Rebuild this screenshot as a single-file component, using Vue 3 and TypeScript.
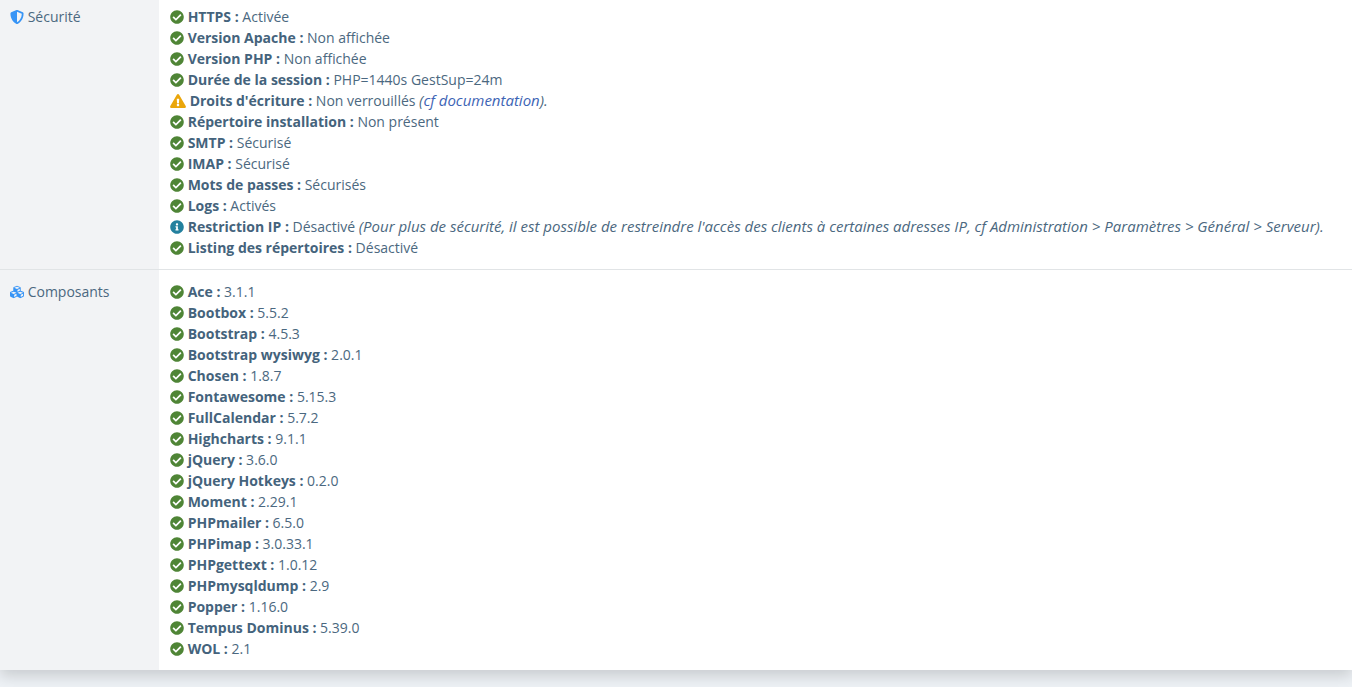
<script setup lang="ts">
type Status = 'ok' | 'warning' | 'info'
type GlyphName = Status | 'shield' | 'cubes'

interface Entry {
  name: string
  value: string
  status?: Status
  link?: string
  note?: string
}

interface Section {
  title: string
  glyph: GlyphName
  entries: Entry[]
}

const glyphs: Record<GlyphName, { box: string; path: string }> = {
  ok: {
    box: '0 0 512 512',
    path: 'M504 256c0 136.967-111.033 248-248 248S8 392.967 8 256 119.033 8 256 8s248 111.033 248 248zM227.314 387.314l184-184c6.248-6.248 6.248-16.379 0-22.627l-22.627-22.627c-6.248-6.249-16.379-6.249-22.628 0L216 308.118l-70.059-70.059c-6.248-6.248-16.379-6.248-22.628 0l-22.627 22.627c-6.248 6.248-6.248 16.379 0 22.627l104 104c6.249 6.249 16.379 6.249 22.628.001z',
  },
  warning: {
    box: '0 0 576 512',
    path: 'M569.517 440.013C587.975 472.007 564.806 512 527.94 512H48.054c-36.937 0-59.999-40.055-41.577-71.987L246.423 23.985c18.467-32.009 64.72-31.951 83.154 0l239.94 416.028zM288 354c-25.405 0-46 20.595-46 46s20.595 46 46 46 46-20.595 46-46-20.595-46-46-46zm-43.673-165.346l7.418 136c.347 6.364 5.609 11.346 11.982 11.346h48.546c6.373 0 11.635-4.982 11.982-11.346l7.418-136c.375-6.874-5.098-12.654-11.982-12.654h-63.383c-6.884 0-12.356 5.78-11.981 12.654z',
  },
  info: {
    box: '0 0 512 512',
    path: 'M256 8C119.043 8 8 119.083 8 256c0 136.997 111.043 248 248 248s248-111.003 248-248C504 119.083 392.957 8 256 8zm0 110c23.196 0 42 18.804 42 42s-18.804 42-42 42-42-18.804-42-42 18.804-42 42-42zm56 254c0 6.627-5.373 12-12 12h-88c-6.627 0-12-5.373-12-12v-24c0-6.627 5.373-12 12-12h12v-64h-12c-6.627 0-12-5.373-12-12v-24c0-6.627 5.373-12 12-12h64c6.627 0 12 5.373 12 12v100h12c6.627 0 12 5.373 12 12v24z',
  },
  shield: {
    box: '0 0 512 512',
    path: 'M466.5 83.7l-192-80a48.15 48.15 0 0 0-36.9 0l-192 80C27.7 91.1 16 108.6 16 128c0 198.5 114.5 335.7 221.5 380.3 11.8 4.9 25.1 4.9 36.9 0C360.1 472.6 496 349.3 496 128c0-19.4-11.7-36.9-29.5-44.3zM256.1 446.3l-.1-381 175.9 73.3c-3.3 151.4-82.1 261.1-175.8 307.7z',
  },
  cubes: {
    box: '0 0 512 512',
    path: 'M488.6 250.2L392 214V105.5c0-15-9.3-28.4-23.4-33.7l-100-37.5c-8.1-3.1-17.1-3.1-25.3 0l-100 37.5c-14.1 5.3-23.4 18.7-23.4 33.7V214l-96.6 36.2C9.3 255.5 0 268.9 0 283.9V394c0 13.6 7.7 26.1 19.9 32.2l100 50c10.1 5.1 22.1 5.1 32.2 0l103.9-52 103.9 52c10.1 5.1 22.1 5.1 32.2 0l100-50c12.2-6.1 19.9-18.6 19.9-32.2V283.9c0-15-9.3-28.4-23.4-33.7zM358 214.8l-85 31.9v-68.2l85-37v73.3zM154 104.1l102-38.2 102 38.2v.6l-102 41.4-102-41.4v-.6zm84 291.1l-85 42.5v-79.1l85-38.8v75.4zm0-112l-102 41.4-102-41.4v-.6l102-38.2 102 38.2v.6zm240 112l-85 42.5v-79.1l85-38.8v75.4zm0-112l-102 41.4-102-41.4v-.6l102-38.2 102 38.2v.6z',
  },
}

const sections: Section[] = [
  {
    title: 'Sécurité',
    glyph: 'shield',
    entries: [
      { name: 'HTTPS', value: 'Activée' },
      { name: 'Version Apache', value: 'Non affichée' },
      { name: 'Version PHP', value: 'Non affichée' },
      { name: 'Durée de la session', value: 'PHP=1440s GestSup=24m' },
      { name: "Droits d'écriture", value: 'Non verrouillés', status: 'warning', link: 'cf documentation' },
      { name: 'Répertoire installation', value: 'Non présent' },
      { name: 'SMTP', value: 'Sécurisé' },
      { name: 'IMAP', value: 'Sécurisé' },
      { name: 'Mots de passes', value: 'Sécurisés' },
      { name: 'Logs', value: 'Activés' },
      {
        name: 'Restriction IP',
        value: 'Désactivé',
        status: 'info',
        note: "(Pour plus de sécurité, il est possible de restreindre l'accès des clients à certaines adresses IP, cf Administration > Paramètres > Général > Serveur).",
      },
      { name: 'Listing des répertoires', value: 'Désactivé' },
    ],
  },
  {
    title: 'Composants',
    glyph: 'cubes',
    entries: [
      { name: 'Ace', value: '3.1.1' },
      { name: 'Bootbox', value: '5.5.2' },
      { name: 'Bootstrap', value: '4.5.3' },
      { name: 'Bootstrap wysiwyg', value: '2.0.1' },
      { name: 'Chosen', value: '1.8.7' },
      { name: 'Fontawesome', value: '5.15.3' },
      { name: 'FullCalendar', value: '5.7.2' },
      { name: 'Highcharts', value: '9.1.1' },
      { name: 'jQuery', value: '3.6.0' },
      { name: 'jQuery Hotkeys', value: '0.2.0' },
      { name: 'Moment', value: '2.29.1' },
      { name: 'PHPmailer', value: '6.5.0' },
      { name: 'PHPimap', value: '3.0.33.1' },
      { name: 'PHPgettext', value: '1.0.12' },
      { name: 'PHPmysqldump', value: '2.9' },
      { name: 'Popper', value: '1.16.0' },
      { name: 'Tempus Dominus', value: '5.39.0' },
      { name: 'WOL', value: '2.1' },
    ],
  },
]
</script>

<template>
  <main class="card">
    <table class="system">
      <tbody>
        <tr v-for="section in sections" :key="section.title">
          <th scope="row">
            <svg class="icon" :class="section.glyph" :viewBox="glyphs[section.glyph].box" aria-hidden="true">
              <path :d="glyphs[section.glyph].path" />
            </svg>
            {{ section.title }}
          </th>
          <td>
            <ul>
              <li v-for="entry in section.entries" :key="entry.name">
                <svg
                  class="icon"
                  :class="entry.status ?? 'ok'"
                  :viewBox="glyphs[entry.status ?? 'ok'].box"
                  aria-hidden="true"
                >
                  <path :d="glyphs[entry.status ?? 'ok'].path" />
                </svg>
                {{ ' ' }}<b>{{ entry.name }} :</b> {{ entry.value }}{{ ' ' }}
                <i v-if="entry.link">(<a href="#documentation">{{ entry.link }}</a>).</i>
                <i v-if="entry.note">{{ entry.note }}</i>
              </li>
            </ul>
          </td>
        </tr>
      </tbody>
    </table>
  </main>
</template>

<style>
body {
  margin: 0;
  background: #eef2f6;
}
</style>

<style scoped>
.card {
  margin-bottom: 17px;
  background: #fff;
  box-shadow: 0 6px 14px rgba(0, 0, 0, 0.16);
}

.system {
  width: 100%;
  border-collapse: separate;
  border-spacing: 0;
  color: #4b6880;
  font-family: "Open Sans", "Noto Sans", sans-serif;
  font-size: 14px;
  line-height: 21px;
}

th,
td {
  padding: 11px;
  vertical-align: top;
  text-align: left;
}

th {
  box-sizing: border-box;
  width: 159px;
  background: #f2f3f5;
  font-weight: 400;
}

th {
  padding-left: 10px;
}

tr:first-child > * {
  padding-top: 6px;
}

tr + tr > * {
  border-top: 1px solid #e1e4e6;
}

ul {
  margin: 0;
  padding: 0;
  list-style: none;
}

b {
  font-weight: 700;
  color: #44637c;
}

i {
  font-size: 15px;
  line-height: 1;
}

a {
  color: #3d64b5;
  text-decoration: none;
}

.icon {
  width: 14px;
  height: 14px;
  vertical-align: -2px;
  fill: currentColor;
}

.ok {
  color: #4f8536;
}

.warning {
  width: 16px;
  color: #eaa60b;
}

.info {
  color: #23809e;
}

.shield,
.cubes {
  color: #3794f6;
}
</style>
